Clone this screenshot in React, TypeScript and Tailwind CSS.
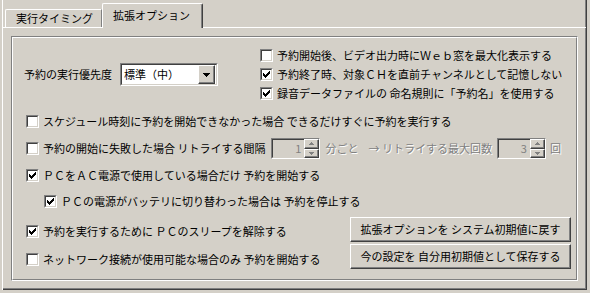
import React from 'react';

const sunkenOuter = 'border border-t-[#808080] border-l-[#808080] border-r-white border-b-white';
const sunkenInner = 'border border-t-[#404040] border-l-[#404040] border-r-[#d4d0c8] border-b-[#d4d0c8]';
const raised =
  'border border-t-white border-l-white border-r-[#404040] border-b-[#404040] shadow-[inset_-1px_-1px_0_#808080]';

function CheckMark() {
  return (
    <svg width="7" height="7" viewBox="0 0 7 7" shapeRendering="crispEdges">
      <path d="M6 0h1v3h-1v1h-1v1h-1v1h-1v1h-1v-1h-1v-1h-1v-3h1v1h1v1h1v-1h1v-1h1z" fill="#000" />
    </svg>
  );
}

function Checkbox({ checked }: { checked?: boolean }) {
  return (
    <span className={`flex h-[13px] w-[13px] shrink-0 ${sunkenOuter}`}>
      <span className={`flex h-full w-full items-center justify-center bg-white ${sunkenInner}`}>
        {checked && <CheckMark />}
      </span>
    </span>
  );
}

function CheckRow({
  checked,
  label,
  className = '',
}: {
  checked?: boolean;
  label: string;
  className?: string;
}) {
  return (
    <div className={`flex items-center gap-[4px] ${className}`}>
      <Checkbox checked={checked} />
      <span className="whitespace-pre leading-none">{label}</span>
    </div>
  );
}

function Arrow({ up, color }: { up?: boolean; color: string }) {
  return (
    <svg width="5" height="3" viewBox="0 0 5 3" shapeRendering="crispEdges">
      <path d={up ? 'M2 0h1v1h1v1h1v1h-5v-1h1v-1h1z' : 'M0 0h5v1h-1v1h-1v1h-1v-1h-1v-1h-1z'} fill={color} />
    </svg>
  );
}

function SpinBox({ value }: { value: string }) {
  return (
    <div className={`flex h-[21px] ${sunkenOuter}`}>
      <div
        className={`flex h-full w-[32px] items-center justify-end bg-[#d4d0c8] pr-[3px] leading-none text-[#808080] ${sunkenInner} border-r-0`}
      >
        {value}
      </div>
      <div className="flex h-full w-[15px] flex-col">
        <div className={`flex flex-1 items-center justify-center bg-[#d4d0c8] ${raised}`}>
          <Arrow up color="#808080" />
        </div>
        <div className={`flex flex-1 items-center justify-center bg-[#d4d0c8] ${raised}`}>
          <Arrow color="#808080" />
        </div>
      </div>
    </div>
  );
}

const disabledText = 'text-[#808080] [text-shadow:1px_1px_0_#fff] leading-none';

export default function App() {
  return (
    <div className="h-[293px] w-[590px] overflow-hidden bg-[#d4d0c8] pb-[3px] pl-[2px] pr-[3px] font-['Noto_Sans_CJK_JP',sans-serif] text-[11px] text-black">
      <div className="flex h-full flex-col border-l border-r border-l-white border-r-[#404040] shadow-[inset_-1px_0_0_#808080]">
        {/* tab strip */}
        <div className="flex h-[27px] shrink-0 items-end pl-[2px]">
          <div className="flex h-[18px] w-[97px] items-center rounded-tl-[2px] border-l border-r border-t border-l-white border-r-[#808080] border-t-white pl-[10px] leading-none">
            実行タイミング
          </div>
          <div className="relative z-10 -mb-px flex h-[25px] w-[101px] items-start rounded-t-[2px] border-l border-r border-t border-l-white border-r-[#404040] border-t-white bg-[#d4d0c8] pl-[10px] pt-[6px] leading-none shadow-[inset_-1px_0_0_#808080]">
            拡張オプション
          </div>
        </div>

        {/* tab page */}
        <div className="flex-1 border-b border-t border-b-[#404040] border-t-white pt-[8px] shadow-[inset_0_-1px_0_#808080,inset_-1px_0_0_#808080]">
          <div className={`ml-[8px] h-[245px] w-[567px] ${sunkenOuter}`}>
            <div className="h-full border border-b-[#808080] border-l-white border-r-[#808080] border-t-white">
              {/* priority + top options */}
              <div className="flex h-[65px] pt-[8px]">
                <div className="flex w-[247px] items-center gap-[8px] pl-[11px]">
                  <span className="leading-none">予約の実行優先度</span>
                  <div className={`h-[23px] w-[98px] ${sunkenOuter}`}>
                    <div className={`flex h-full w-full items-center bg-white pl-[2px] pr-px ${sunkenInner}`}>
                      <span className="flex-1 leading-none">標準（中）</span>
                      <div className={`flex h-[19px] w-[17px] items-center justify-center bg-[#d4d0c8] ${raised}`}>
                        <svg width="7" height="4" viewBox="0 0 7 4" shapeRendering="crispEdges">
                          <path d="M0 0h7v1h-1v1h-1v1h-1v1h-1v-1h-1v-1h-1v-1h-1z" fill="#000" />
                        </svg>
                      </div>
                    </div>
                  </div>
                </div>
                <div className="flex flex-col">
                  <CheckRow className="h-[19px]" label="予約開始後、ビデオ出力時にＷｅｂ窓を最大化表示する" />
                  <CheckRow className="h-[19px]" checked label="予約終了時、対象ＣＨを直前チャンネルとして記憶しない" />
                  <CheckRow className="h-[19px]" checked label="録音データファイルの 命名規則に「予約名」を使用する" />
                </div>
              </div>

              {/* option rows */}
              <div className="mt-[5px] flex flex-col pl-[13px]">
                <CheckRow
                  className="h-[27px]"
                  label="スケジュール時刻に予約を開始できなかった場合 できるだけすぐに予約を実行する"
                />
                <div className="flex h-[27px] items-center">
                  <CheckRow label="予約の開始に失敗した場合 リトライする間隔" />
                  <div className="ml-[6px]">
                    <SpinBox value="1" />
                  </div>
                  <span className={`ml-[5px] ${disabledText}`}>分ごと</span>
                  <span className={`ml-[10px] whitespace-pre ${disabledText}`}>→ リトライする最大回数</span>
                  <div className="ml-[5px]">
                    <SpinBox value="3" />
                  </div>
                  <span className={`ml-[4px] ${disabledText}`}>回</span>
                </div>
                <CheckRow className="h-[26px]" checked label="ＰＣをＡＣ電源で使用している場合だけ 予約を開始する" />
                <CheckRow
                  className="h-[26px] pl-[18px]"
                  checked
                  label="ＰＣの電源がバッテリに切り替わった場合は 予約を停止する"
                />
              </div>

              {/* bottom rows + buttons */}
              <div className="flex pt-[3px]">
                <div className="flex flex-col pl-[13px]">
                  <CheckRow className="h-[28px]" checked label="予約を実行するために ＰＣのスリープを解除する" />
                  <CheckRow className="h-[28px]" label="ネットワーク接続が使用可能な場合のみ 予約を開始する" />
                </div>
                <div className="ml-auto mr-[5px] flex flex-col gap-[2px]">
                  <button
                    className={`flex h-[25px] w-[221px] items-center justify-center bg-[#d4d0c8] leading-none ${raised}`}
                  >
                    拡張オプションを システム初期値に戻す
                  </button>
                  <button
                    className={`flex h-[25px] w-[221px] items-center justify-center bg-[#d4d0c8] leading-none ${raised}`}
                  >
                    今の設定を 自分用初期値として保存する
                  </button>
                </div>
              </div>
            </div>
          </div>
        </div>
      </div>
    </div>
  );
}
